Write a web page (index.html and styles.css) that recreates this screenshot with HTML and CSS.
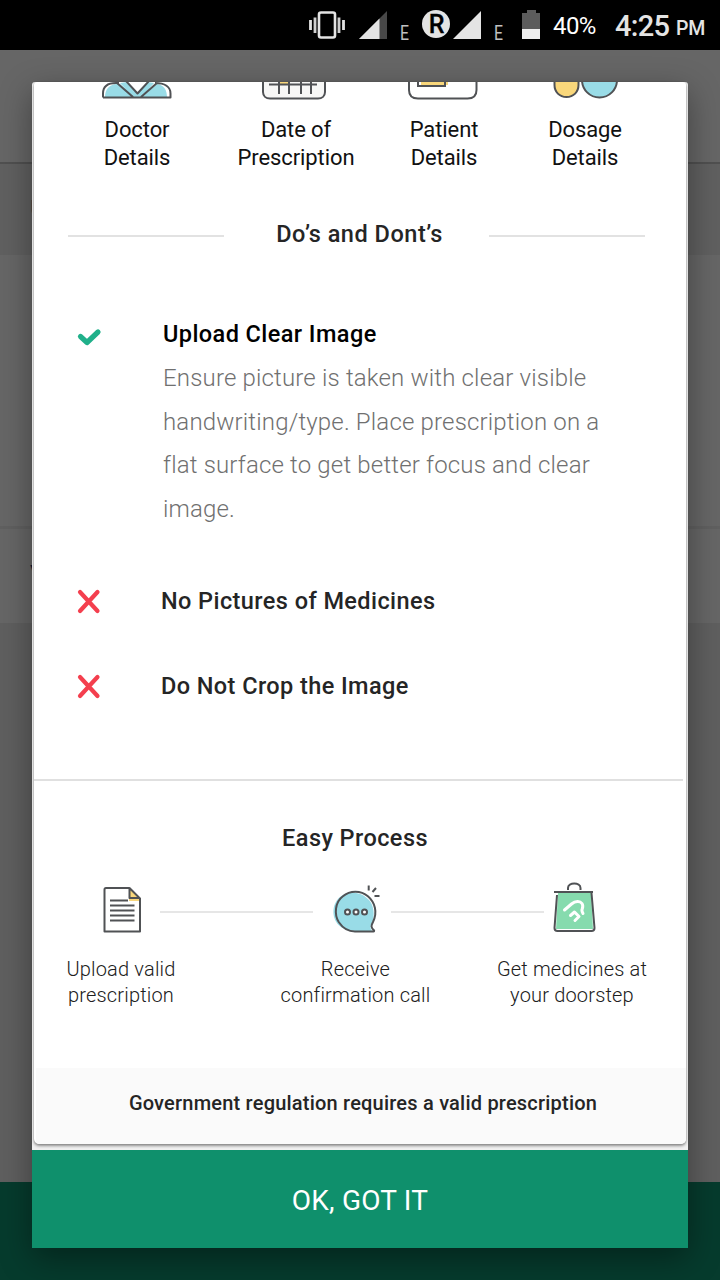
FILE: index.html
```html
<!DOCTYPE html>
<html lang="en">
<head>
<meta charset="utf-8">
<title>Upload prescription</title>
<link rel="stylesheet" href="styles.css">
</head>
<body>
<div class="screen">
  <header class="status">
    <svg class="status-icons" width="240" height="50" viewBox="300 0 240 50">
      <rect x="319" y="12.500" width="16" height="25" rx="2" fill="none" stroke="#e4e4e4" stroke-width="2.600"/>
      <path d="M315 17.500v15.500M339 17.500v15.500" stroke="#cfcfcf" stroke-width="2.800"/>
      <path d="M310.500 20v10M343.500 20v10" stroke="#e4e4e4" stroke-width="2.800"/>
      <path d="M387 11v28h-28z" fill="#484848"/><path d="M379.500 18.500V39H359z" fill="#e4e4e4"/>
      <text x="400" y="39.500" class="net" textLength="9" lengthAdjust="spacingAndGlyphs">E</text>
      <circle cx="436" cy="24" r="14" fill="#e4e4e4"/>
      <text x="436.500" y="32.500" class="roam">R</text>
      <path d="M481 11v28h-28z" fill="#e4e4e4"/>
      <text x="494" y="39.500" class="net" textLength="9" lengthAdjust="spacingAndGlyphs">E</text>
      <path d="M522 13h5v-3h9v3h5v16h-19z" fill="#5c5c5c"/><path d="M522 29h19v10h-19z" fill="#eee"/>
    </svg>
    <span class="percent">40%</span>
    <span class="time">4:25</span><span class="pm">PM</span>
  </header>
  <main class="backdrop">
    <div class="bg-toolbar"></div>
    <div class="bg-heading">U</div>
    <div class="bg-panel"></div>
    <div class="bg-row">V</div>
    <div class="bg-rest"></div>
    <div class="bg-action"></div>
  </main>

  <section class="dialog">
    <div class="card">
      <div class="details">
        <div class="detail">
          <svg width="70" height="19" viewBox="102 82 70 19" fill="none" stroke="#505255" stroke-width="2">
            <path d="M105 97c0-8 5-13 12-13h3l14 13zM142 97l15-13c7 1 10 6 10 13zM120 83l7-1 10 11 10-11 7 1-12 14h-9z" fill="#99dce7" stroke="none"/>
            <path d="M125 81h23l-11 11z" fill="#fff" stroke="none"/>
            <path d="M103 97.500v-4c0-7 5-10.500 13-10.500h3M155 83c10 0 15.500 4 15.500 10.500v4H103M117 83l16 14M157 83l-16 14M126 81l11.500 12.500L149 81" stroke-linejoin="round"/>
          </svg>
          <p>Doctor<br>Details</p>
        </div>
        <div class="detail">
          <svg width="68" height="19" viewBox="262 82 68 19" fill="none" stroke="#505255" stroke-width="2">
            <path d="M263 76h62v16c0 4-3 6.500-7 6.500h-48c-4 0-7-2.500-7-6.500z" fill="#f7f7f6"/>
            <path d="M280 82h8v2h-8z" fill="#f9d77b" stroke="none"/>
            <path d="M269 84.500h48M279 80v14M289 80v14M301 80v14M311 80v14"/>
          </svg>
          <p>Date of<br>Prescription</p>
        </div>
        <div class="detail">
          <svg width="75" height="19" viewBox="407 82 75 19" fill="none" stroke="#505255" stroke-width="2">
            <path d="M409 78h67.500v12c0 6-4 8.500-9 8.500h-49.500c-5 0-9-2.500-9-8.500z" fill="#fff"/>
            <path d="M421 80h27v5h-27z" fill="#f9d77b" stroke="none"/>
            <path d="M418 80v6h27v-6"/>
          </svg>
          <p>Patient<br>Details</p>
        </div>
        <div class="detail">
          <svg width="66" height="19" viewBox="552 82 66 19" stroke="#505255" stroke-width="2">
            <path d="M554.500 76v9c0 7 5 12 12 12s12-5 12-12v-9z" fill="#f9d77b"/>
            <circle cx="599.500" cy="80" r="17.500" fill="#99dce7"/>
          </svg>
          <p>Dosage<br>Details</p>
        </div>
      </div>

      <div class="divider-title"><i></i><h2>Do’s and Dont’s</h2><i></i></div>

      <ul class="rules">
        <li class="rule rule-yes">
          <svg width="26" height="24" viewBox="76 325 26 24"><path d="M80.500 336.500l6.500 6L98 332" fill="none" stroke="#20b08a" stroke-width="5.200" stroke-linecap="round" stroke-linejoin="round"/></svg>
          <div>
            <h3 class="black">Upload Clear Image</h3>
            <p>Ensure picture is taken with clear visible<br>handwriting/type. Place prescription on a<br>flat surface to get better focus and clear<br>image.</p>
          </div>
        </li>
        <li class="rule rule-no">
          <svg width="26" height="26" viewBox="76 588 26 26"><path d="M80 592l17.500 19M97.500 592L80 611" fill="none" stroke="#f43f4e" stroke-width="4.200" stroke-linecap="round"/></svg>
          <h3>No Pictures of Medicines</h3>
        </li>
        <li class="rule rule-no">
          <svg width="26" height="26" viewBox="76 588 26 26"><path d="M80 592l17.500 19M97.500 592L80 611" fill="none" stroke="#f43f4e" stroke-width="4.200" stroke-linecap="round"/></svg>
          <h3>Do Not Crop the Image</h3>
        </li>
      </ul>

      <div class="process">
        <h2>Easy Process</h2>
        <div class="steps-art">
          <svg width="40" height="58" viewBox="102 880 40 58" fill="none" stroke="#505255" stroke-width="2">
            <path d="M130 888l11 11h-12z" fill="#f9d77b" stroke="none"/>
            <path d="M129 899h11v2h-11z" fill="#f9d77b" stroke="none"/>
            <path d="M129 888h-23q-1.500 0-1.500 1.500v42h35.500v-33l-10.500-10.500v10h10.500" stroke-linejoin="round"/>
            <path d="M110 900.500h18M110 905.500h24.500M110 910.500h24.500M110 915.500h24.500M110 920.500h24.500" stroke-width="1.900"/>
          </svg>
          <i class="link-first"></i>
          <svg width="50" height="58" viewBox="331 880 50 58" fill="none" stroke="#505255" stroke-width="2">
            <path d="M345 894c-10 4-13 14-11 23 3 10 11 14 22 14h16c-2-3-2-5 0-8 3-7 2-18-3-23-6-7-16-9-24-6z" fill="#99dce7" stroke="none"/>
            <path d="M355 931.500h18.500c.6 0 .9-.7.400-1.200-3-3-3-4.500-1-8 5-10 2-20-5-26-7-6-18-6-25 0-8 6-9 18-4 26 4 6 9 9.200 16.100 9.200z"/>
            <circle cx="347.500" cy="912" r="2.500" fill="#fff"/><circle cx="356" cy="912" r="2.500" fill="#fff"/><circle cx="364.500" cy="912" r="2.500" fill="#fff"/>
            <path d="M368.700 885.500v5M372.500 892l3.500-4M374.500 896h5"/>
          </svg>
          <i class="link-last"></i>
          <svg width="46" height="58" viewBox="551 880 46 58" fill="none" stroke="#505255" stroke-width="2">
            <path d="M558 893h33l2 36h-37z" fill="#86dbae" stroke="none"/>
            <path d="M554 892h39M568 890v-2c0-6 12.500-6 12.500 0v2M557 895l-2.500 33c0 2 1 3 3 3h34c2 0 3-1 3-3l-3-35"/>
            <path d="M564.500 910l7-6c4-3.300 8.500-3.300 10.500-.5 1.800 2.800.2 5-.1 6.500 0 1.500.6 2.600 1.100 3.500M570.500 915.500l4-3.500 4.500 4.500-4 4" stroke="#fff" stroke-width="3" stroke-linecap="round" stroke-linejoin="round"/>
          </svg>
        </div>
        <div class="steps-text">
          <p>Upload valid<br>prescription</p>
          <p>Receive<br>confirmation call</p>
          <p class="last">Get medicines at<br>your doorstep</p>
        </div>
      </div>
      <footer class="note"><span>Government regulation requires a valid prescription</span></footer>
    </div>
    <button class="ok"><span>OK, GOT IT</span></button>
  </section>
</div>
</body>
</html>
```

FILE: styles.css
```css
* { box-sizing: border-box; }
body, h2, h3, p, ul { margin: 0; padding: 0; }
body { font-family: Roboto, sans-serif; color: #252525; }
svg { display: block; flex: none; }
.screen { position: relative; width: 720px; height: 1280px; overflow: hidden; background: #666; }

.status { display: flex; height: 50px; padding-left: 300px; background: #000; color: #e4e4e4; white-space: nowrap; }
.status span { display: block; }
.net { font-size: 20px; fill: #c0c0c0; }
.roam { font-size: 25px; font-weight: 500; text-anchor: middle; fill: #000; stroke: #000; stroke-width: .3px; }
.percent { width: 75px; padding: 11px 0 0 13px; font-size: 24px; line-height: 30px; letter-spacing: -.6px; color: #fff; }
.time { width: 61px; padding-top: 9px; font-size: 29px; line-height: 34px; font-weight: 500; letter-spacing: -.7px; }
.pm { padding-top: 16px; font-size: 19.5px; line-height: 26px; font-weight: 500; letter-spacing: -.3px; }

.backdrop { display: flex; flex-direction: column; height: 1230px; color: #222; font-size: 20px; }
.backdrop > div { flex: none; padding-left: 30px; }
.bg-toolbar { height: 114px; background: #666; border-bottom: 2px solid #505050; }
.bg-heading { height: 91px; padding-top: 32px; background: #606060; color: #444; }
.bg-panel { height: 274px; background: #666; border-bottom: 3px solid #606060; }
.bg-row { height: 94px; padding-top: 32px; background: #666; color: #101c34; }
.backdrop > .bg-rest { flex: 1; background: #5f5f5f; }
.bg-action { height: 98px; background: #063b2d; }

.dialog { position: absolute; left: 32px; top: 82px; width: 656px; height: 1166px; border-radius: 3px 3px 0 0; background: #f0f0f0; box-shadow: 0 10px 32px rgba(0,0,0,.38); overflow: visible; }
.card { display: flex; flex-direction: column; width: 652px; height: 1062px; margin: 0 2px; border-radius: 3px 3px 5px 5px; background: #fff; box-shadow: 0 2px 3px rgba(0,0,0,.4), 0 0 2px rgba(0,0,0,.2); overflow: hidden; }
.details { display: grid; grid-template-columns: 160px 158px 138px 144px; height: 137px; padding-left: 23px; color: #111; }
.detail { display: flex; flex-direction: column; align-items: center; }
.detail p { margin-top: 15px; font-size: 22px; line-height: 28px; text-align: center; letter-spacing: -.1px; white-space: nowrap; }

.divider-title { display: flex; align-items: center; justify-content: space-between; height: 30px; padding: 0 41px 0 34px; }
.divider-title i { width: 156px; height: 2px; margin-top: 3px; background: #e2e2e2; }
.divider-title h2 { margin-left: 6px; letter-spacing: .52px; }
h2, h3 { font-size: 23.5px; line-height: 28px; font-weight: 500; white-space: nowrap; letter-spacing: .42px; }
.rules { height: 530px; padding-top: 71px; list-style: none; }
.rule { display: grid; grid-template-columns: 85px 1fr; padding-left: 42px; }
.rule-yes { height: 267px; }
.rule-yes svg { margin-top: 5px; }
.rule-no { height: 85px; }
.rule-no svg { margin-top: 1px; }
.rule .black { padding-left: 2px; color: #000; }
.rule p { padding: 9px 0 0 2px; font-size: 24px; line-height: 43.5px; font-weight: 300; color: #707070; white-space: nowrap; letter-spacing: .17px; }

.process { height: 289px; margin-right: 3px; border-top: 2px solid #e0e0e0; }
.process h2 { padding: 43px 0 0 0; margin-right: 7px; text-align: center; }
.steps-art { display: flex; align-items: center; height: 58px; margin-top: 28px; padding-left: 68px; }
.steps-art i { width: 153px; height: 2px; margin-top: 5px; background: #e6e6e6; }
.link-first { margin: 0 18px; }
.link-last { margin: 0 7px 0 10px; }
.steps-text { display: grid; grid-template-columns: 174px 295px 138px; margin-top: 18px; color: #202020; }
.steps-text p { text-align: center; font-size: 20px; line-height: 26px; font-weight: 350; letter-spacing: .18px; white-space: nowrap; }
.steps-text .last { display: grid; justify-content: center; }
.note { display: flex; align-items: center; justify-content: center; flex: 1; margin: 0 0 0 2px; padding: 0 0 7px 3px; background: #fafafa; font-size: 20px; font-weight: 500; letter-spacing: .21px; white-space: nowrap; }
.note span { margin-right: -1px; }
.ok { display: flex; width: 656px; height: 98px; margin-top: 6px; padding: 4px 0 0; border: 0; background: #0f906c; color: #fff; align-items: center; justify-content: center; font: 400 28px/34px Roboto, sans-serif; letter-spacing: .2px; }
```
